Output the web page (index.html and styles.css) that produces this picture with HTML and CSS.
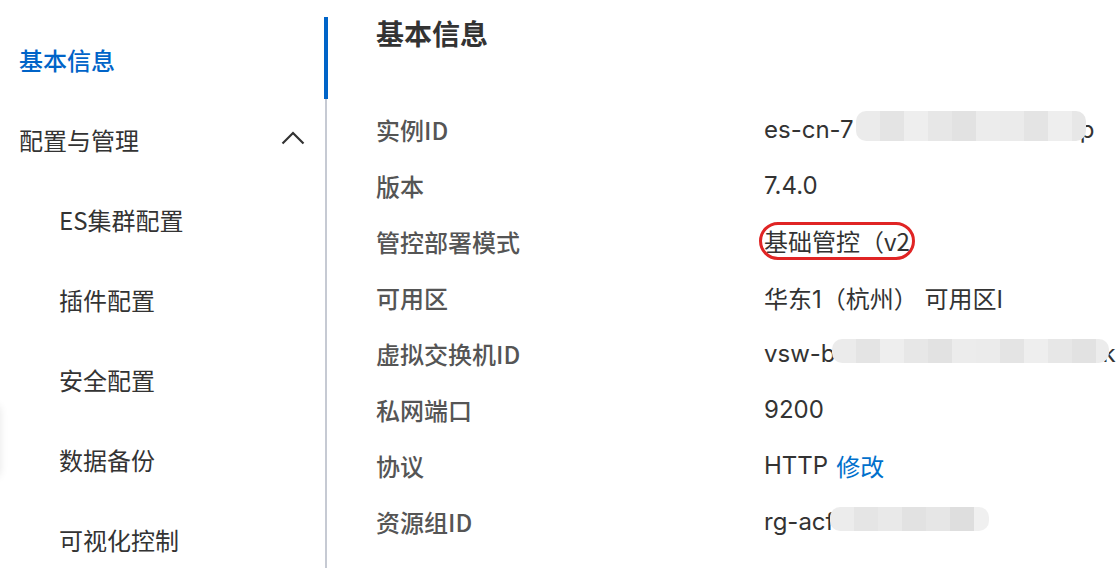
FILE: index.html
```html
<!DOCTYPE html>
<html lang="zh-CN">
<head>
<meta charset="utf-8">
<title>基本信息</title>
<link rel="stylesheet" href="styles.css">
</head>
<body>
<div class="edge-shadow"></div>
<div class="layout">
  <aside class="sidebar">
    <ul class="nav">
      <li class="nav-item active">基本信息</li>
      <li class="nav-item group">
        <span>配置与管理</span>
        <svg class="chevron" width="24" height="14" viewBox="0 0 24 14"><polyline points="1.5,12.5 12,2 22.5,12.5" fill="none" stroke="#333" stroke-width="2.2"/></svg>
      </li>
      <li class="nav-item sub">ES集群配置</li>
      <li class="nav-item sub">插件配置</li>
      <li class="nav-item sub">安全配置</li>
      <li class="nav-item sub">数据备份</li>
      <li class="nav-item sub">可视化控制</li>
    </ul>
  </aside>
  <main class="main">
    <h1 class="title">基本信息</h1>
    <dl class="info">
      <dt>实例ID</dt>
      <dd>es-cn-7<span class="blob blob-a"></span><span class="tail">p</span></dd>
      <dt>版本</dt>
      <dd>7.4.0</dd>
      <dt>管控部署模式</dt>
      <dd><span class="circled">基础管控（v2</span></dd>
      <dt>可用区</dt>
      <dd>华东1（杭州） 可用区I</dd>
      <dt>虚拟交换机ID</dt>
      <dd>vsw-b<span class="blob blob-b"></span><span class="tail">k</span></dd>
      <dt>私网端口</dt>
      <dd>9200</dd>
      <dt>协议</dt>
      <dd>HTTP <a class="link">修改</a></dd>
      <dt>资源组ID</dt>
      <dd>rg-acf<span class="blob blob-c"></span></dd>
    </dl>
  </main>
</div>
</body>
</html>
```

FILE: styles.css
```css
* { box-sizing: border-box; }
html, body {
  margin: 0;
  padding: 0;
  background: #fff;
  width: 1120px;
  height: 568px;
  overflow: hidden;
}
body {
  font-family: "Inter", "Noto Sans CJK SC", sans-serif;
  color: #333;
  position: relative;
}
.edge-shadow {
  position: absolute;
  left: -20px;
  top: 405px;
  width: 20px;
  height: 72px;
  border-radius: 6px;
  box-shadow: 0 0 8px rgba(0, 0, 0, 0.10);
}
.layout {
  display: flex;
  height: 568px;
}
.sidebar {
  width: 327px;
  flex: none;
  margin-top: 17px;
  border-right: 2px solid #c6cad3;
}
.nav {
  list-style: none;
  margin: 0;
  padding: 2px 0 0 0;
}
.nav-item {
  position: relative;
  height: 80px;
  display: flex;
  align-items: center;
  padding-left: 19px;
  font-size: 24px;
  font-family: "Noto Sans CJK SC", sans-serif;
  color: #333;
}
.nav-item.active {
  color: #0064c8;
  font-weight: 500;
}
.nav-item.active::after {
  content: "";
  position: absolute;
  right: -3px;
  top: -2px;
  width: 4px;
  height: 82px;
  background: #0064c8;
}
.nav-item.group {
  justify-content: space-between;
  padding-right: 20px;
}
.chevron { display: block; margin-top: -2px; }
.nav-item.sub { padding-left: 59px; }

.main {
  flex: 1;
  padding-left: 49px;
  padding-top: 13px;
}
.title {
  margin: 0;
  font-size: 28px;
  line-height: 40px;
  font-weight: 700;
  color: #333;
  font-family: "Noto Sans CJK SC", sans-serif;
}
.info {
  margin: 48px 0 0 0;
  display: grid;
  grid-template-columns: 388px 1fr;
  grid-auto-rows: 56px;
  align-items: center;
}
.info dt {
  font-size: 24px;
  font-weight: 500;
  color: #555;
  font-family: "Noto Sans CJK SC", sans-serif;
}
.info dd {
  margin: 0;
  font-size: 24px;
  color: #333;
  white-space: nowrap;
  display: flex;
  align-items: center;
}
.blob {
  display: inline-block;
  position: relative;
  z-index: 1;
  height: 30px;
  border-radius: 10px;
  background: repeating-linear-gradient(90deg,
    #ebebeb 0 24px, #e4e4e4 24px 48px, #eeeeee 48px 72px,
    #e7e7e7 72px 96px, #e2e2e2 96px 120px, #ececec 120px 144px);
}
.blob-a { width: 230px; margin-left: 2px; margin-top: -6px; }
.blob-b { width: 277px; margin-left: -4px; margin-top: -5px; height: 24px; }
.blob-c { width: 159px; margin-left: -4px; margin-top: -4px; height: 24px;
  background: repeating-linear-gradient(90deg,
    #ececec 0 24px, #e5e5e5 24px 48px, #e9e9e9 48px 72px,
    #e2e2e2 72px 96px, #e6e6e6 96px 120px, #dedede 120px 144px, #f0f0f0 144px 168px); }
.tail { margin-left: -6px; }
.circled {
  display: inline-block;
  border: 3px solid #e02424;
  border-radius: 19px;
  padding: 2px 2px 2px 2px;
  margin-left: -5px;
  font-family: "Noto Sans CJK SC", sans-serif;
  line-height: 28px;
}
.link {
  color: #0070cc;
  margin-left: 8px;
  font-family: "Noto Sans CJK SC", sans-serif;
}
```
